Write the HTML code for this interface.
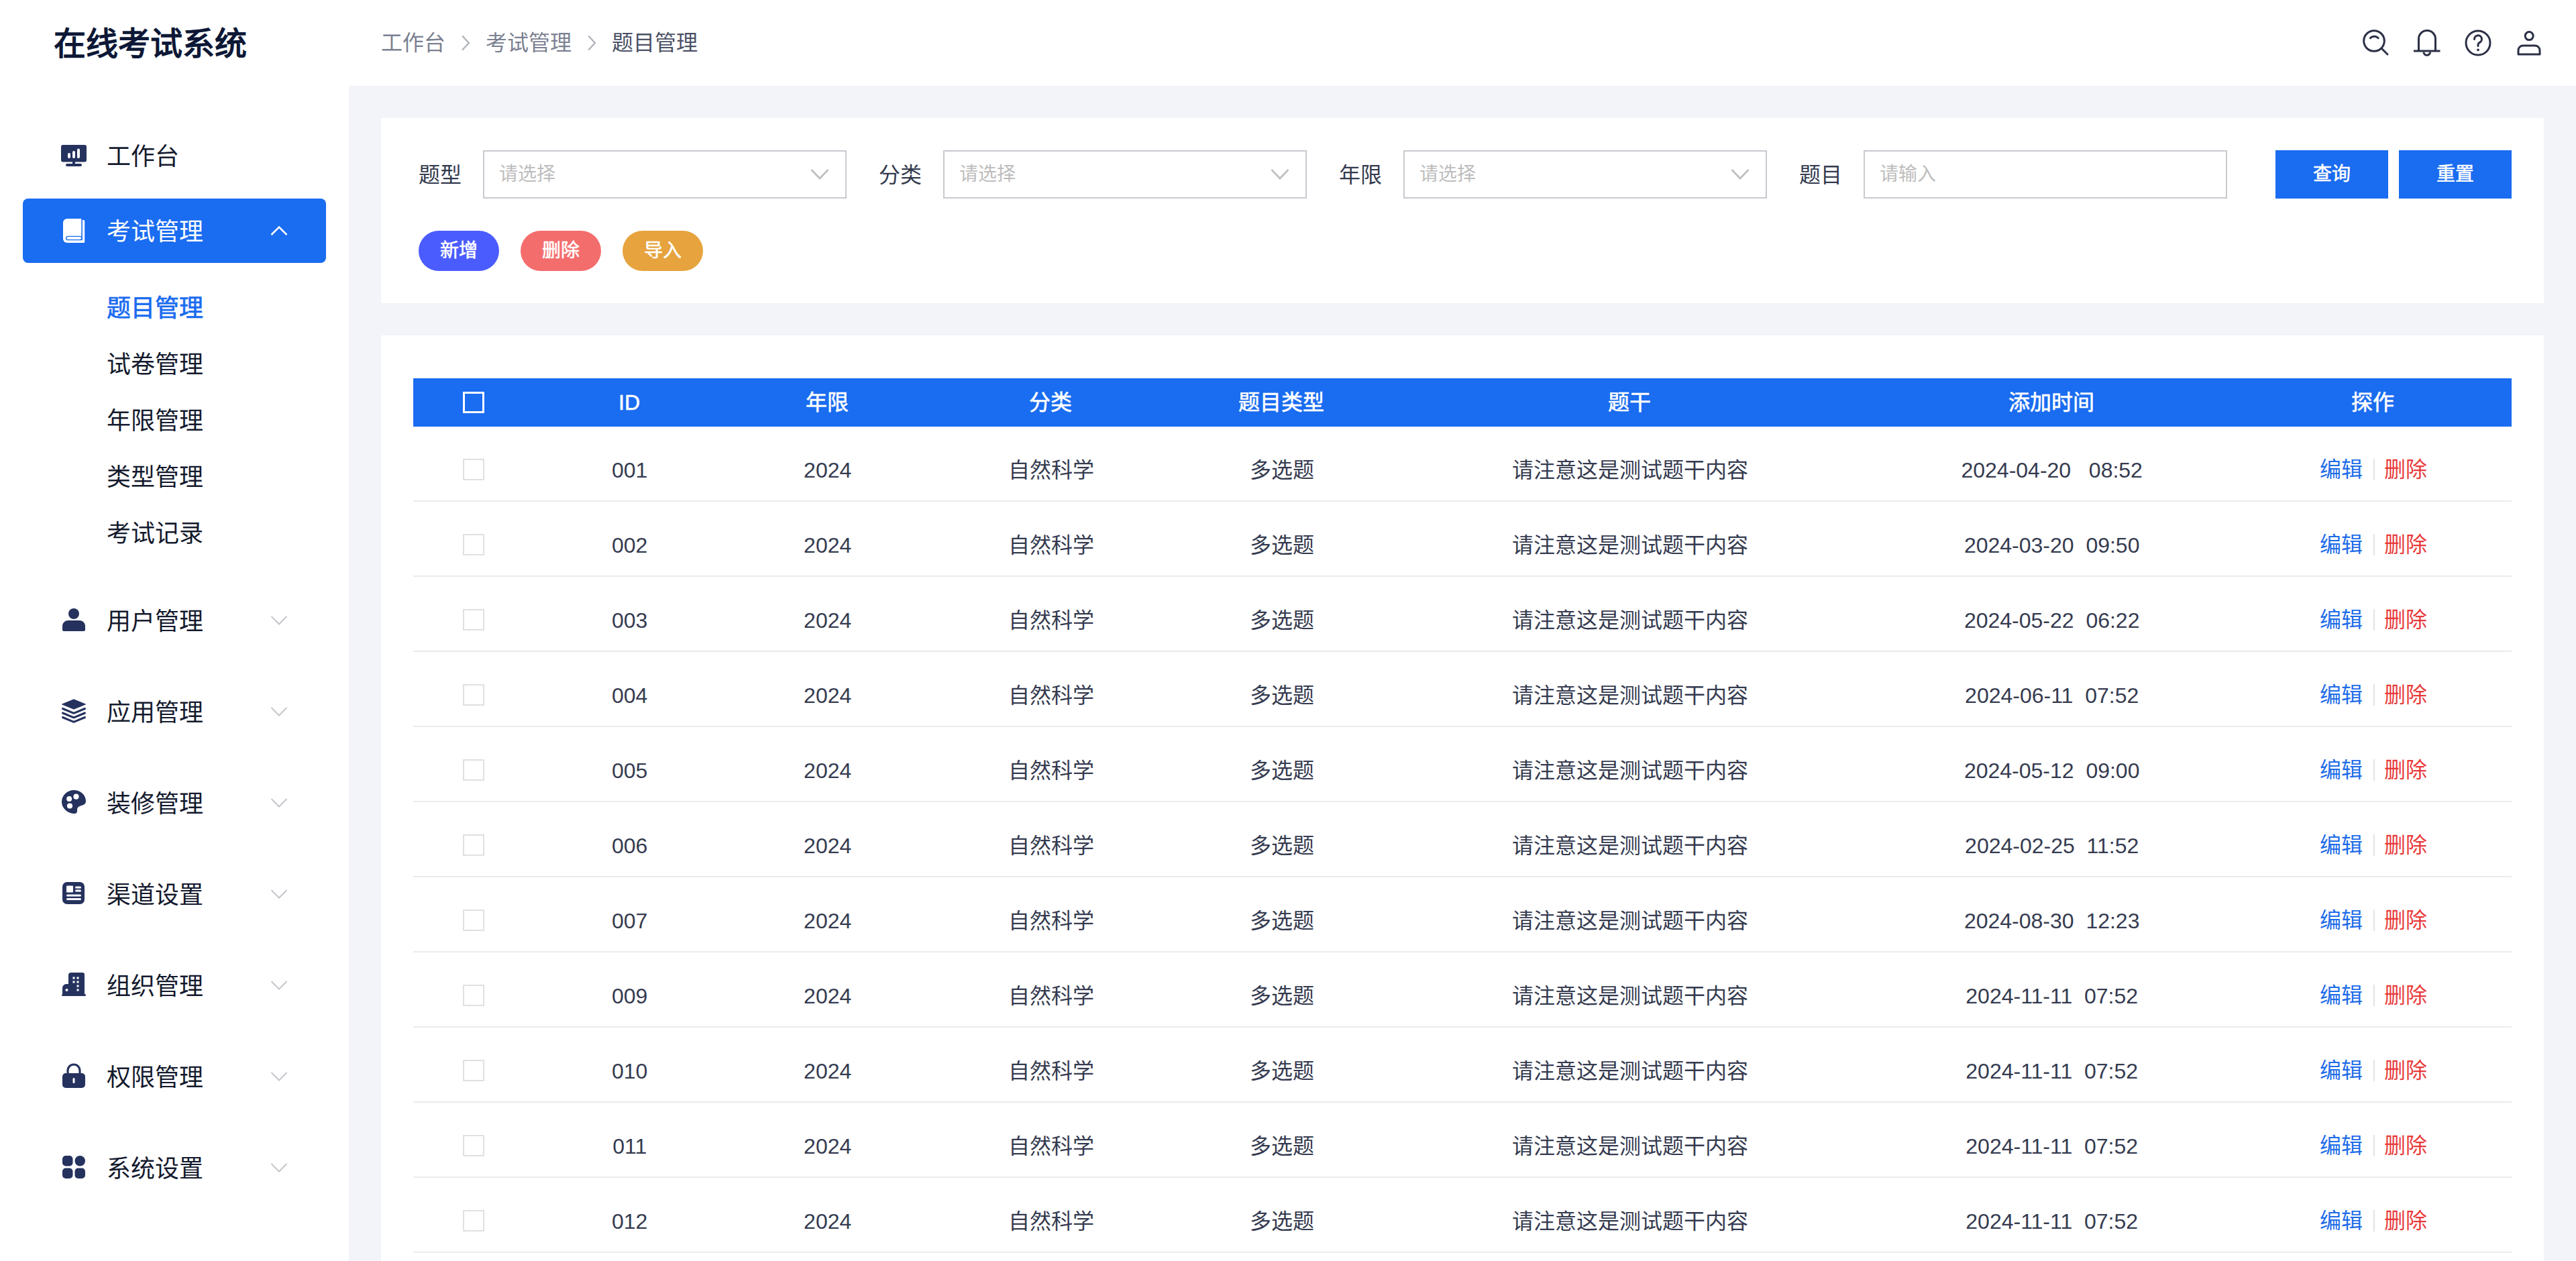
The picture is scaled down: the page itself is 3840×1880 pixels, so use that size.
<!DOCTYPE html>
<html lang="zh-CN"><head><meta charset="utf-8"><title>题目管理</title><style>
*{margin:0;padding:0;box-sizing:border-box}
html,body{width:3840px;height:1880px;overflow:hidden;background:#fff}
body{font-family:"Liberation Sans",sans-serif;position:relative;color:#2c3246}
.a{position:absolute}
.t{position:absolute;white-space:pre;height:64px;line-height:64px}
.c{position:absolute;white-space:pre;height:64px;line-height:64px;text-align:center;width:800px}
svg{position:absolute;display:block;overflow:visible}
.sb{font-size:36px;color:#141a2e}
.ico{fill:#25325e}
</style></head><body>
<div class="a" style="left:520px;top:128px;width:3320px;height:1752px;background:#f3f4f9"></div>
<div class="a" style="left:568px;top:176px;width:3224px;height:276px;background:#fff"></div>
<div class="a" style="left:568px;top:500px;width:3224px;height:1380px;background:#fff"></div>
<div class="t" style="left:80px;top:34px;font-size:48px;color:#0d1836;font-weight:900;">在线考试系统</div>
<div class="t" style="left:568px;top:32px;font-size:32px;color:#7b8191;font-weight:400;">工作台</div>
<div class="t" style="left:724px;top:32px;font-size:32px;color:#7b8191;font-weight:400;">考试管理</div>
<div class="t" style="left:912px;top:32px;font-size:32px;color:#4a5064;font-weight:400;">题目管理</div>
<svg style="left:688px;top:52px" width="13" height="24" viewBox="0 0 13 24"><path d="M1.2 1.5 L11 12 L1.2 22.5" fill="none" stroke="#adb0b8" stroke-width="2.2"/></svg>
<svg style="left:876px;top:52px" width="13" height="24" viewBox="0 0 13 24"><path d="M1.2 1.5 L11 12 L1.2 22.5" fill="none" stroke="#adb0b8" stroke-width="2.2"/></svg>
<svg style="left:3516px;top:40px" width="48" height="48" viewBox="0 0 48 48" fill="none" stroke="#2b3045" stroke-width="3"><circle cx="23" cy="21" r="15.3"/><path d="M34.5 32.5 L43 41" stroke-linecap="round"/><path d="M17.4 16.8 A8 8 0 0 1 29.2 16.8" stroke-linecap="round"/></svg>
<svg style="left:3594px;top:40px" width="48" height="48" viewBox="0 0 48 48" fill="none" stroke="#2b3045" stroke-width="3"><path d="M11.5 36 V18 A12.5 12.5 0 0 1 36.5 18 V36"/><path d="M4 36 H43.5"/><path d="M19 37.5 A4.8 4.8 0 0 0 28.6 37.5"/></svg>
<svg style="left:3670px;top:40px" width="48" height="48" viewBox="0 0 48 48" fill="none" stroke="#2b3045" stroke-width="3"><circle cx="24" cy="24" r="18"/><path d="M18.5 18.5 A5.5 5.5 0 1 1 26 23.5 Q24 24.5 24 27.5 V28.5" stroke-linecap="round"/><circle cx="24" cy="34.3" r="1.9" fill="#2b3045" stroke="none"/></svg>
<svg style="left:3746px;top:40px" width="48" height="48" viewBox="0 0 48 48" fill="none" stroke="#2b3045" stroke-width="3"><circle cx="24.2" cy="13.6" r="6"/><path d="M8 41 V35 A7 7 0 0 1 15 28 H33 A7 7 0 0 1 40 35 V41 Z" stroke-linejoin="round"/></svg>
<svg style="left:91px;top:216px" width="38" height="33" viewBox="0 0 38 33"><rect x="0" y="0" width="38" height="25.5" rx="3" fill="#25325e"/><rect x="17" y="25" width="4" height="4" fill="#25325e"/><rect x="7" y="28" width="24" height="4" rx="2" fill="#25325e"/><rect x="10" y="12" width="4" height="8" rx="2" fill="#fff"/><rect x="17" y="9" width="4" height="11" rx="2" fill="#fff"/><rect x="24" y="5.5" width="4" height="14.5" rx="2" fill="#fff"/></svg>
<div class="t" style="left:158.5px;top:202.3px;font-size:36px;color:#141a2e;font-weight:400;">工作台</div>
<div class="a" style="left:34px;top:296px;width:452px;height:96px;border-radius:8px;background:#1a6cf0"></div>
<svg style="left:93px;top:325px" width="34" height="38" viewBox="0 0 34 38"><path d="M7 1 H28.3 V37 H7 A6 6 0 0 1 1 31 V7 A6 6 0 0 1 7 1 Z" fill="#fff"/><path d="M29.9 3 H31.7 A1.5 1.5 0 0 1 33.2 4.5 V35.5 A1.5 1.5 0 0 1 31.7 37 H27 V33.2 H29.9 Z" fill="#fff"/><rect x="5.6" y="27.3" width="23.2" height="5.4" rx="2.7" fill="#fff" stroke="#1a6cf0" stroke-width="1.3"/></svg>
<div class="t" style="left:158.5px;top:314.3px;font-size:36px;color:#ffffff;font-weight:400;">考试管理</div>
<svg style="left:403px;top:336px" width="26" height="16" viewBox="0 0 26 16"><path d="M1.5 14 L13 2.5 L24.5 14" fill="none" stroke="#fff" stroke-width="2.6"/></svg>
<div class="t" style="left:158.5px;top:428.3px;font-size:36px;color:#1a6cf0;font-weight:400;-webkit-text-stroke:0.7px #1a6cf0">题目管理</div>
<div class="t" style="left:158.5px;top:512.3px;font-size:36px;color:#141a2e;font-weight:400;">试卷管理</div>
<div class="t" style="left:158.5px;top:596.3px;font-size:36px;color:#141a2e;font-weight:400;">年限管理</div>
<div class="t" style="left:158.5px;top:680.3px;font-size:36px;color:#141a2e;font-weight:400;">类型管理</div>
<div class="t" style="left:158.5px;top:764.3px;font-size:36px;color:#141a2e;font-weight:400;">考试记录</div>
<svg style="left:93px;top:907px" width="34" height="34" viewBox="0 0 34 34"><circle cx="17" cy="8" r="8" fill="#25325e"/><path d="M0 26 A8.5 8.5 0 0 1 8.5 18 H25.5 A8.5 8.5 0 0 1 34 26 V32 A2 2 0 0 1 32 34 H2 A2 2 0 0 1 0 32 Z" fill="#25325e"/></svg>
<div class="t" style="left:158.5px;top:894.5px;font-size:36px;color:#141a2e;font-weight:400;">用户管理</div>
<svg style="left:403px;top:916.5px" width="26" height="16" viewBox="0 0 26 16"><path d="M1.5 2 L13 13.5 L24.5 2" fill="none" stroke="#c4c6cc" stroke-width="2"/></svg>
<svg style="left:92px;top:1042px" width="36" height="34" viewBox="0 0 36 34"><path d="M18 0.8 L35.5 8 L18 15.2 L0.5 8 Z" fill="#25325e" stroke="#25325e" stroke-width="1" stroke-linejoin="round"/><g fill="none" stroke="#25325e" stroke-width="3" stroke-linecap="round" stroke-linejoin="round"><path d="M1.5 14.5 L18 21.3 L34.5 14.5"/><path d="M1.5 21 L18 27.8 L34.5 21"/><path d="M1.5 27.5 L18 34.3 L34.5 27.5"/></g></svg>
<div class="t" style="left:158.5px;top:1030.5px;font-size:36px;color:#141a2e;font-weight:400;">应用管理</div>
<svg style="left:403px;top:1052.5px" width="26" height="16" viewBox="0 0 26 16"><path d="M1.5 2 L13 13.5 L24.5 2" fill="none" stroke="#c4c6cc" stroke-width="2"/></svg>
<svg style="left:91px;top:1177px" width="37" height="37" viewBox="0 0 37 37"><path d="M19 1 C29 1 37 8 37 17.5 C37 22 33 23.5 29 24.5 C26 25.3 24 27 24 30 C24 32 24.5 35 21 36 C10 36.5 1 28 1 18.5 C1 9 9 1 19 1 Z" fill="#25325e"/><circle cx="22.5" cy="10.7" r="4.1" fill="#fff"/><circle cx="12.2" cy="14" r="4" fill="#fff"/><circle cx="13" cy="24.5" r="4.1" fill="#fff"/></svg>
<div class="t" style="left:158.5px;top:1166.5px;font-size:36px;color:#141a2e;font-weight:400;">装修管理</div>
<svg style="left:403px;top:1188.5px" width="26" height="16" viewBox="0 0 26 16"><path d="M1.5 2 L13 13.5 L24.5 2" fill="none" stroke="#c4c6cc" stroke-width="2"/></svg>
<svg style="left:93px;top:1315px" width="33" height="33" viewBox="0 0 33 33"><rect x="0" y="0" width="33" height="33" rx="7" fill="#25325e"/><rect x="6" y="5.5" width="10" height="10" rx="1" fill="#fff"/><rect x="19" y="6.5" width="9" height="3" rx="1.5" fill="#fff"/><rect x="19" y="11.5" width="9" height="3" rx="1.5" fill="#fff"/><rect x="6" y="18.5" width="22" height="3" rx="1.5" fill="#fff"/><rect x="6" y="24" width="22" height="3" rx="1.5" fill="#fff"/></svg>
<div class="t" style="left:158.5px;top:1302.5px;font-size:36px;color:#141a2e;font-weight:400;">渠道设置</div>
<svg style="left:403px;top:1324.5px" width="26" height="16" viewBox="0 0 26 16"><path d="M1.5 2 L13 13.5 L24.5 2" fill="none" stroke="#c4c6cc" stroke-width="2"/></svg>
<svg style="left:92px;top:1450px" width="36" height="35" viewBox="0 0 36 35"><path d="M10 4 A4 4 0 0 1 14 0 H31 A3 3 0 0 1 34 3 V32 H1 V23 A6 6 0 0 1 7 17 H10 Z" fill="#25325e"/><rect x="0" y="32" width="36" height="3" rx="1.5" fill="#25325e"/><rect x="16.5" y="6.5" width="3" height="3" fill="#fff"/><rect x="22.5" y="6.5" width="3" height="3" fill="#fff"/><rect x="16.5" y="12.5" width="3" height="3" fill="#fff"/><rect x="22.5" y="12.5" width="3" height="3" fill="#fff"/><rect x="22.5" y="18.5" width="3" height="3" fill="#fff"/><rect x="22.5" y="24.5" width="3" height="3" fill="#fff"/><circle cx="7.5" cy="26" r="2" fill="#fff"/></svg>
<div class="t" style="left:158.5px;top:1438.5px;font-size:36px;color:#141a2e;font-weight:400;">组织管理</div>
<svg style="left:403px;top:1460.5px" width="26" height="16" viewBox="0 0 26 16"><path d="M1.5 2 L13 13.5 L24.5 2" fill="none" stroke="#c4c6cc" stroke-width="2"/></svg>
<svg style="left:93px;top:1586px" width="34" height="36" viewBox="0 0 34 36"><path d="M8 14 V10 A9 9 0 0 1 26 10 V14" fill="none" stroke="#25325e" stroke-width="3.2"/><rect x="0" y="14" width="34" height="22" rx="5" fill="#25325e"/><rect x="15.5" y="21" width="3" height="8" rx="1.5" fill="#fff"/></svg>
<div class="t" style="left:158.5px;top:1574.5px;font-size:36px;color:#141a2e;font-weight:400;">权限管理</div>
<svg style="left:403px;top:1596.5px" width="26" height="16" viewBox="0 0 26 16"><path d="M1.5 2 L13 13.5 L24.5 2" fill="none" stroke="#c4c6cc" stroke-width="2"/></svg>
<svg style="left:93px;top:1723px" width="34" height="34" viewBox="0 0 34 34"><rect x="0" y="0" width="15.5" height="15.5" rx="5" fill="#25325e"/><rect x="18.5" y="0" width="15.5" height="15.5" rx="7.7" fill="#25325e"/><rect x="0" y="18.5" width="15.5" height="15.5" rx="5" fill="#25325e"/><rect x="18.5" y="18.5" width="15.5" height="15.5" rx="5" fill="#25325e"/></svg>
<div class="t" style="left:158.5px;top:1710.5px;font-size:36px;color:#141a2e;font-weight:400;">系统设置</div>
<svg style="left:403px;top:1732.5px" width="26" height="16" viewBox="0 0 26 16"><path d="M1.5 2 L13 13.5 L24.5 2" fill="none" stroke="#c4c6cc" stroke-width="2"/></svg>
<div class="t" style="left:624px;top:229px;font-size:32px;color:#333a4e;font-weight:400;">题型</div>
<div class="a" style="left:720px;top:224px;width:542px;height:72px;border:2px solid #c9cacf;background:#fff"></div>
<div class="t" style="left:744px;top:228px;font-size:28px;color:#bdbdbd;font-weight:400;">请选择</div>
<svg style="left:1208px;top:251px" width="28" height="18" viewBox="0 0 28 18"><path d="M1.5 2 L14 15 L26.5 2" fill="none" stroke="#bdbdbd" stroke-width="2.6"/></svg>
<div class="t" style="left:1310px;top:229px;font-size:32px;color:#333a4e;font-weight:400;">分类</div>
<div class="a" style="left:1406px;top:224px;width:542px;height:72px;border:2px solid #c9cacf;background:#fff"></div>
<div class="t" style="left:1430px;top:228px;font-size:28px;color:#bdbdbd;font-weight:400;">请选择</div>
<svg style="left:1894px;top:251px" width="28" height="18" viewBox="0 0 28 18"><path d="M1.5 2 L14 15 L26.5 2" fill="none" stroke="#bdbdbd" stroke-width="2.6"/></svg>
<div class="t" style="left:1996px;top:229px;font-size:32px;color:#333a4e;font-weight:400;">年限</div>
<div class="a" style="left:2092px;top:224px;width:542px;height:72px;border:2px solid #c9cacf;background:#fff"></div>
<div class="t" style="left:2116px;top:228px;font-size:28px;color:#bdbdbd;font-weight:400;">请选择</div>
<svg style="left:2580px;top:251px" width="28" height="18" viewBox="0 0 28 18"><path d="M1.5 2 L14 15 L26.5 2" fill="none" stroke="#bdbdbd" stroke-width="2.6"/></svg>
<div class="t" style="left:2682px;top:229px;font-size:32px;color:#333a4e;font-weight:400;">题目</div>
<div class="a" style="left:2778px;top:224px;width:542px;height:72px;border:2px solid #c9cacf;background:#fff"></div>
<div class="t" style="left:2802px;top:228px;font-size:28px;color:#bdbdbd;font-weight:400;">请输入</div>
<div class="a" style="left:3392px;top:224px;width:168px;height:72px;background:#1a6cf0"></div>
<div class="c" style="left:3076px;top:228px;font-size:28px;color:#fff;font-weight:400;;-webkit-text-stroke:0.6px #fff">查询</div>
<div class="a" style="left:3576px;top:224px;width:168px;height:72px;background:#1a6cf0"></div>
<div class="c" style="left:3260px;top:228px;font-size:28px;color:#fff;font-weight:400;;-webkit-text-stroke:0.6px #fff">重置</div>
<div class="a" style="left:624px;top:344px;width:120px;height:60px;border-radius:30px;background:#4b5cfe"></div>
<div class="c" style="left:284px;top:342px;font-size:28px;color:#fff;font-weight:400;;-webkit-text-stroke:0.6px #fff">新增</div>
<div class="a" style="left:776px;top:344px;width:120px;height:60px;border-radius:30px;background:#f46d6d"></div>
<div class="c" style="left:436px;top:342px;font-size:28px;color:#fff;font-weight:400;;-webkit-text-stroke:0.6px #fff">删除</div>
<div class="a" style="left:928px;top:344px;width:120px;height:60px;border-radius:30px;background:#e6a33e"></div>
<div class="c" style="left:588px;top:342px;font-size:28px;color:#fff;font-weight:400;;-webkit-text-stroke:0.6px #fff">导入</div>
<div class="a" style="left:616px;top:564px;width:3128px;height:72px;background:#1a6cf0"></div>
<div class="a" style="left:690px;top:584px;width:32px;height:32px;border:3px solid #fff"></div>
<div class="c" style="left:538px;top:568px;font-size:32px;color:#fff;font-weight:400;;-webkit-text-stroke:0.6px #fff">ID</div>
<div class="c" style="left:833px;top:568px;font-size:32px;color:#fff;font-weight:400;;-webkit-text-stroke:0.6px #fff">年限</div>
<div class="c" style="left:1166px;top:568px;font-size:32px;color:#fff;font-weight:400;;-webkit-text-stroke:0.6px #fff">分类</div>
<div class="c" style="left:1510px;top:568px;font-size:32px;color:#fff;font-weight:400;;-webkit-text-stroke:0.6px #fff">题目类型</div>
<div class="c" style="left:2029px;top:568px;font-size:32px;color:#fff;font-weight:400;;-webkit-text-stroke:0.6px #fff">题干</div>
<div class="c" style="left:2658px;top:568px;font-size:32px;color:#fff;font-weight:400;;-webkit-text-stroke:0.6px #fff">添加时间</div>
<div class="c" style="left:3137px;top:568px;font-size:32px;color:#fff;font-weight:400;;-webkit-text-stroke:0.6px #fff">探作</div>
<div class="a" style="left:616px;top:746px;width:3128px;height:2px;background:#ebebeb"></div>
<div class="a" style="left:690px;top:684px;width:32px;height:32px;border:2px solid #e0e0e0"></div>
<div class="c" style="left:538.7px;top:668.5px;font-size:32px;color:#353b50;font-weight:400;">001</div>
<div class="c" style="left:833.7px;top:668.5px;font-size:32px;color:#353b50;font-weight:400;">2024</div>
<div class="c" style="left:1166.7px;top:668.5px;font-size:32px;color:#353b50;font-weight:400;">自然科学</div>
<div class="c" style="left:1510.7px;top:668.5px;font-size:32px;color:#353b50;font-weight:400;">多选题</div>
<div class="c" style="left:2029.6999999999998px;top:668.5px;font-size:32px;color:#353b50;font-weight:400;">请注意这是测试题干内容</div>
<div class="c" style="left:2658.7px;top:668.5px;font-size:32px;color:#353b50;font-weight:400;">2024-04-20   08:52</div>
<div class="t" style="left:3458px;top:668px;font-size:32px;color:#1e6ce8;font-weight:400;">编辑</div>
<div class="a" style="left:3538px;top:684px;width:2px;height:32px;background:#e3e3e3"></div>
<div class="t" style="left:3554px;top:668px;font-size:32px;color:#e83a3a;font-weight:400;">删除</div>
<div class="a" style="left:616px;top:858px;width:3128px;height:2px;background:#ebebeb"></div>
<div class="a" style="left:690px;top:796px;width:32px;height:32px;border:2px solid #e0e0e0"></div>
<div class="c" style="left:538.7px;top:780.5px;font-size:32px;color:#353b50;font-weight:400;">002</div>
<div class="c" style="left:833.7px;top:780.5px;font-size:32px;color:#353b50;font-weight:400;">2024</div>
<div class="c" style="left:1166.7px;top:780.5px;font-size:32px;color:#353b50;font-weight:400;">自然科学</div>
<div class="c" style="left:1510.7px;top:780.5px;font-size:32px;color:#353b50;font-weight:400;">多选题</div>
<div class="c" style="left:2029.6999999999998px;top:780.5px;font-size:32px;color:#353b50;font-weight:400;">请注意这是测试题干内容</div>
<div class="c" style="left:2658.7px;top:780.5px;font-size:32px;color:#353b50;font-weight:400;">2024-03-20  09:50</div>
<div class="t" style="left:3458px;top:780px;font-size:32px;color:#1e6ce8;font-weight:400;">编辑</div>
<div class="a" style="left:3538px;top:796px;width:2px;height:32px;background:#e3e3e3"></div>
<div class="t" style="left:3554px;top:780px;font-size:32px;color:#e83a3a;font-weight:400;">删除</div>
<div class="a" style="left:616px;top:970px;width:3128px;height:2px;background:#ebebeb"></div>
<div class="a" style="left:690px;top:908px;width:32px;height:32px;border:2px solid #e0e0e0"></div>
<div class="c" style="left:538.7px;top:892.5px;font-size:32px;color:#353b50;font-weight:400;">003</div>
<div class="c" style="left:833.7px;top:892.5px;font-size:32px;color:#353b50;font-weight:400;">2024</div>
<div class="c" style="left:1166.7px;top:892.5px;font-size:32px;color:#353b50;font-weight:400;">自然科学</div>
<div class="c" style="left:1510.7px;top:892.5px;font-size:32px;color:#353b50;font-weight:400;">多选题</div>
<div class="c" style="left:2029.6999999999998px;top:892.5px;font-size:32px;color:#353b50;font-weight:400;">请注意这是测试题干内容</div>
<div class="c" style="left:2658.7px;top:892.5px;font-size:32px;color:#353b50;font-weight:400;">2024-05-22  06:22</div>
<div class="t" style="left:3458px;top:892px;font-size:32px;color:#1e6ce8;font-weight:400;">编辑</div>
<div class="a" style="left:3538px;top:908px;width:2px;height:32px;background:#e3e3e3"></div>
<div class="t" style="left:3554px;top:892px;font-size:32px;color:#e83a3a;font-weight:400;">删除</div>
<div class="a" style="left:616px;top:1082px;width:3128px;height:2px;background:#ebebeb"></div>
<div class="a" style="left:690px;top:1020px;width:32px;height:32px;border:2px solid #e0e0e0"></div>
<div class="c" style="left:538.7px;top:1004.5px;font-size:32px;color:#353b50;font-weight:400;">004</div>
<div class="c" style="left:833.7px;top:1004.5px;font-size:32px;color:#353b50;font-weight:400;">2024</div>
<div class="c" style="left:1166.7px;top:1004.5px;font-size:32px;color:#353b50;font-weight:400;">自然科学</div>
<div class="c" style="left:1510.7px;top:1004.5px;font-size:32px;color:#353b50;font-weight:400;">多选题</div>
<div class="c" style="left:2029.6999999999998px;top:1004.5px;font-size:32px;color:#353b50;font-weight:400;">请注意这是测试题干内容</div>
<div class="c" style="left:2658.7px;top:1004.5px;font-size:32px;color:#353b50;font-weight:400;">2024-06-11  07:52</div>
<div class="t" style="left:3458px;top:1004px;font-size:32px;color:#1e6ce8;font-weight:400;">编辑</div>
<div class="a" style="left:3538px;top:1020px;width:2px;height:32px;background:#e3e3e3"></div>
<div class="t" style="left:3554px;top:1004px;font-size:32px;color:#e83a3a;font-weight:400;">删除</div>
<div class="a" style="left:616px;top:1194px;width:3128px;height:2px;background:#ebebeb"></div>
<div class="a" style="left:690px;top:1132px;width:32px;height:32px;border:2px solid #e0e0e0"></div>
<div class="c" style="left:538.7px;top:1116.5px;font-size:32px;color:#353b50;font-weight:400;">005</div>
<div class="c" style="left:833.7px;top:1116.5px;font-size:32px;color:#353b50;font-weight:400;">2024</div>
<div class="c" style="left:1166.7px;top:1116.5px;font-size:32px;color:#353b50;font-weight:400;">自然科学</div>
<div class="c" style="left:1510.7px;top:1116.5px;font-size:32px;color:#353b50;font-weight:400;">多选题</div>
<div class="c" style="left:2029.6999999999998px;top:1116.5px;font-size:32px;color:#353b50;font-weight:400;">请注意这是测试题干内容</div>
<div class="c" style="left:2658.7px;top:1116.5px;font-size:32px;color:#353b50;font-weight:400;">2024-05-12  09:00</div>
<div class="t" style="left:3458px;top:1116px;font-size:32px;color:#1e6ce8;font-weight:400;">编辑</div>
<div class="a" style="left:3538px;top:1132px;width:2px;height:32px;background:#e3e3e3"></div>
<div class="t" style="left:3554px;top:1116px;font-size:32px;color:#e83a3a;font-weight:400;">删除</div>
<div class="a" style="left:616px;top:1306px;width:3128px;height:2px;background:#ebebeb"></div>
<div class="a" style="left:690px;top:1244px;width:32px;height:32px;border:2px solid #e0e0e0"></div>
<div class="c" style="left:538.7px;top:1228.5px;font-size:32px;color:#353b50;font-weight:400;">006</div>
<div class="c" style="left:833.7px;top:1228.5px;font-size:32px;color:#353b50;font-weight:400;">2024</div>
<div class="c" style="left:1166.7px;top:1228.5px;font-size:32px;color:#353b50;font-weight:400;">自然科学</div>
<div class="c" style="left:1510.7px;top:1228.5px;font-size:32px;color:#353b50;font-weight:400;">多选题</div>
<div class="c" style="left:2029.6999999999998px;top:1228.5px;font-size:32px;color:#353b50;font-weight:400;">请注意这是测试题干内容</div>
<div class="c" style="left:2658.7px;top:1228.5px;font-size:32px;color:#353b50;font-weight:400;">2024-02-25  11:52</div>
<div class="t" style="left:3458px;top:1228px;font-size:32px;color:#1e6ce8;font-weight:400;">编辑</div>
<div class="a" style="left:3538px;top:1244px;width:2px;height:32px;background:#e3e3e3"></div>
<div class="t" style="left:3554px;top:1228px;font-size:32px;color:#e83a3a;font-weight:400;">删除</div>
<div class="a" style="left:616px;top:1418px;width:3128px;height:2px;background:#ebebeb"></div>
<div class="a" style="left:690px;top:1356px;width:32px;height:32px;border:2px solid #e0e0e0"></div>
<div class="c" style="left:538.7px;top:1340.5px;font-size:32px;color:#353b50;font-weight:400;">007</div>
<div class="c" style="left:833.7px;top:1340.5px;font-size:32px;color:#353b50;font-weight:400;">2024</div>
<div class="c" style="left:1166.7px;top:1340.5px;font-size:32px;color:#353b50;font-weight:400;">自然科学</div>
<div class="c" style="left:1510.7px;top:1340.5px;font-size:32px;color:#353b50;font-weight:400;">多选题</div>
<div class="c" style="left:2029.6999999999998px;top:1340.5px;font-size:32px;color:#353b50;font-weight:400;">请注意这是测试题干内容</div>
<div class="c" style="left:2658.7px;top:1340.5px;font-size:32px;color:#353b50;font-weight:400;">2024-08-30  12:23</div>
<div class="t" style="left:3458px;top:1340px;font-size:32px;color:#1e6ce8;font-weight:400;">编辑</div>
<div class="a" style="left:3538px;top:1356px;width:2px;height:32px;background:#e3e3e3"></div>
<div class="t" style="left:3554px;top:1340px;font-size:32px;color:#e83a3a;font-weight:400;">删除</div>
<div class="a" style="left:616px;top:1530px;width:3128px;height:2px;background:#ebebeb"></div>
<div class="a" style="left:690px;top:1468px;width:32px;height:32px;border:2px solid #e0e0e0"></div>
<div class="c" style="left:538.7px;top:1452.5px;font-size:32px;color:#353b50;font-weight:400;">009</div>
<div class="c" style="left:833.7px;top:1452.5px;font-size:32px;color:#353b50;font-weight:400;">2024</div>
<div class="c" style="left:1166.7px;top:1452.5px;font-size:32px;color:#353b50;font-weight:400;">自然科学</div>
<div class="c" style="left:1510.7px;top:1452.5px;font-size:32px;color:#353b50;font-weight:400;">多选题</div>
<div class="c" style="left:2029.6999999999998px;top:1452.5px;font-size:32px;color:#353b50;font-weight:400;">请注意这是测试题干内容</div>
<div class="c" style="left:2658.7px;top:1452.5px;font-size:32px;color:#353b50;font-weight:400;">2024-11-11  07:52</div>
<div class="t" style="left:3458px;top:1452px;font-size:32px;color:#1e6ce8;font-weight:400;">编辑</div>
<div class="a" style="left:3538px;top:1468px;width:2px;height:32px;background:#e3e3e3"></div>
<div class="t" style="left:3554px;top:1452px;font-size:32px;color:#e83a3a;font-weight:400;">删除</div>
<div class="a" style="left:616px;top:1642px;width:3128px;height:2px;background:#ebebeb"></div>
<div class="a" style="left:690px;top:1580px;width:32px;height:32px;border:2px solid #e0e0e0"></div>
<div class="c" style="left:538.7px;top:1564.5px;font-size:32px;color:#353b50;font-weight:400;">010</div>
<div class="c" style="left:833.7px;top:1564.5px;font-size:32px;color:#353b50;font-weight:400;">2024</div>
<div class="c" style="left:1166.7px;top:1564.5px;font-size:32px;color:#353b50;font-weight:400;">自然科学</div>
<div class="c" style="left:1510.7px;top:1564.5px;font-size:32px;color:#353b50;font-weight:400;">多选题</div>
<div class="c" style="left:2029.6999999999998px;top:1564.5px;font-size:32px;color:#353b50;font-weight:400;">请注意这是测试题干内容</div>
<div class="c" style="left:2658.7px;top:1564.5px;font-size:32px;color:#353b50;font-weight:400;">2024-11-11  07:52</div>
<div class="t" style="left:3458px;top:1564px;font-size:32px;color:#1e6ce8;font-weight:400;">编辑</div>
<div class="a" style="left:3538px;top:1580px;width:2px;height:32px;background:#e3e3e3"></div>
<div class="t" style="left:3554px;top:1564px;font-size:32px;color:#e83a3a;font-weight:400;">删除</div>
<div class="a" style="left:616px;top:1754px;width:3128px;height:2px;background:#ebebeb"></div>
<div class="a" style="left:690px;top:1692px;width:32px;height:32px;border:2px solid #e0e0e0"></div>
<div class="c" style="left:538.7px;top:1676.5px;font-size:32px;color:#353b50;font-weight:400;">011</div>
<div class="c" style="left:833.7px;top:1676.5px;font-size:32px;color:#353b50;font-weight:400;">2024</div>
<div class="c" style="left:1166.7px;top:1676.5px;font-size:32px;color:#353b50;font-weight:400;">自然科学</div>
<div class="c" style="left:1510.7px;top:1676.5px;font-size:32px;color:#353b50;font-weight:400;">多选题</div>
<div class="c" style="left:2029.6999999999998px;top:1676.5px;font-size:32px;color:#353b50;font-weight:400;">请注意这是测试题干内容</div>
<div class="c" style="left:2658.7px;top:1676.5px;font-size:32px;color:#353b50;font-weight:400;">2024-11-11  07:52</div>
<div class="t" style="left:3458px;top:1676px;font-size:32px;color:#1e6ce8;font-weight:400;">编辑</div>
<div class="a" style="left:3538px;top:1692px;width:2px;height:32px;background:#e3e3e3"></div>
<div class="t" style="left:3554px;top:1676px;font-size:32px;color:#e83a3a;font-weight:400;">删除</div>
<div class="a" style="left:616px;top:1866px;width:3128px;height:2px;background:#ebebeb"></div>
<div class="a" style="left:690px;top:1804px;width:32px;height:32px;border:2px solid #e0e0e0"></div>
<div class="c" style="left:538.7px;top:1788.5px;font-size:32px;color:#353b50;font-weight:400;">012</div>
<div class="c" style="left:833.7px;top:1788.5px;font-size:32px;color:#353b50;font-weight:400;">2024</div>
<div class="c" style="left:1166.7px;top:1788.5px;font-size:32px;color:#353b50;font-weight:400;">自然科学</div>
<div class="c" style="left:1510.7px;top:1788.5px;font-size:32px;color:#353b50;font-weight:400;">多选题</div>
<div class="c" style="left:2029.6999999999998px;top:1788.5px;font-size:32px;color:#353b50;font-weight:400;">请注意这是测试题干内容</div>
<div class="c" style="left:2658.7px;top:1788.5px;font-size:32px;color:#353b50;font-weight:400;">2024-11-11  07:52</div>
<div class="t" style="left:3458px;top:1788px;font-size:32px;color:#1e6ce8;font-weight:400;">编辑</div>
<div class="a" style="left:3538px;top:1804px;width:2px;height:32px;background:#e3e3e3"></div>
<div class="t" style="left:3554px;top:1788px;font-size:32px;color:#e83a3a;font-weight:400;">删除</div>
</body></html>
